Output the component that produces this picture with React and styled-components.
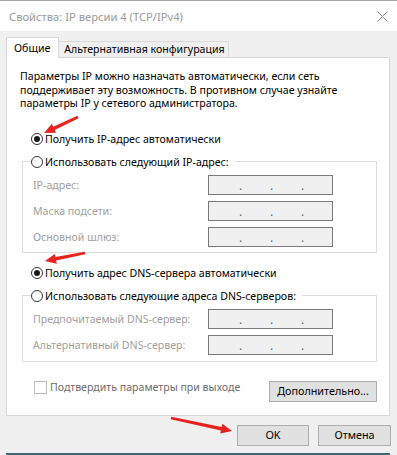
import React from 'react';
import styled, { createGlobalStyle } from 'styled-components';

const GlobalStyle = createGlobalStyle`
  html, body { margin: 0; padding: 0; background: #f0f0f0; }
  body { font-family: "Noto Sans", "Segoe UI", sans-serif; }
  * { box-sizing: border-box; }
`;

const Window = styled.div`
  position: relative;
  width: 397px;
  height: 455px;
  display: flex;
  flex-direction: column;
  background: #f0f0f0;
  overflow: hidden;
  font-size: 10.6px;
  color: #000;
`;

const TitleBar = styled.div`
  height: 31px;
  flex: none;
  background: #fff;
  border-top: 1px solid #a5a5a5;
  display: flex;
  align-items: center;
  justify-content: space-between;
  padding: 0 9px 0 9px;
  color: #9a9a9a;
  font-size: 11.2px;
`;

const Body = styled.div`
  flex: 1;
  display: flex;
  flex-direction: column;
  padding: 6px 7px 0 6px;
`;

const TabStrip = styled.div`
  display: flex;
  align-items: flex-end;
  height: 20px;
  position: relative;
  z-index: 1;
`;

const Tab = styled.div`
  height: ${p => (p.$active ? '21px' : '16px')};
  margin-bottom: ${p => (p.$active ? '-1px' : '0')};
  background: ${p => (p.$active ? '#fff' : '#f0f0f0')};
  border: 1px solid #d9d9d9;
  border-bottom: none;
  border-left: ${p => (p.$active ? '1px solid #d9d9d9' : 'none')};
  padding: ${p => (p.$active ? '0 8px 0 7px' : '0 3px 0 5px')};
  display: flex;
  align-items: center;
  line-height: 1;
  white-space: nowrap;
`;

const Panel = styled.div`
  height: 359px;
  flex: none;
  background: #fff;
  border: 1px solid #d9d9d9;
  padding: 12px 12px 0 13px;
  display: flex;
  flex-direction: column;
`;

const Description = styled.p`
  margin: 0;
  line-height: 13.5px;
  white-space: nowrap;
`;

const OptionRow = styled.label`
  display: flex;
  align-items: center;
  gap: 2px;
  height: 14px;
  margin-top: ${p => p.$mt || 0}px;
  margin-left: 11px;
  white-space: nowrap;
`;

const Radio = styled.span`
  width: 12px;
  height: 12px;
  flex: none;
  border-radius: 50%;
  border: 1px solid #333;
  background: #fff;
  display: flex;
  align-items: center;
  justify-content: center;
  &::after {
    content: '';
    width: 6px;
    height: 6px;
    border-radius: 50%;
    background: ${p => (p.$checked ? '#1a1a1a' : 'transparent')};
  }
`;

const Group = styled.fieldset`
  margin: ${p => p.$mt || 0}px 0 0 2px;
  border: 1px solid #dcdcdc;
  padding: 6px 43px ${p => p.$pb || 6}px 10px;
  min-width: 0;
`;

const Legend = styled.legend`
  padding: 0 6px 0 0;
  margin-left: -2px;
  display: flex;
  align-items: center;
  gap: 2px;
  height: 14px;
  white-space: nowrap;
`;

const FieldGrid = styled.div`
  display: grid;
  grid-template-columns: 1fr 125px;
  row-gap: 6px;
  align-items: center;
`;

const FieldLabel = styled.span`
  color: #a0a0a0;
  white-space: nowrap;
`;

const IpBox = styled.div`
  height: 20px;
  border: 1px solid #7a7a7a;
  background: #f0f0f0;
  display: flex;
  align-items: center;
  padding-left: 2px;
  color: #5a6a7a;
`;

const Seg = styled.span`
  flex: 1;
`;

const Dot = styled.span`
  width: 3px;
  text-align: center;
  line-height: 1;
  font-size: 12px;
  transform: translateY(1px);
`;

const BottomRow = styled.div`
  display: flex;
  justify-content: space-between;
  align-items: flex-start;
  margin-top: 19px;
  padding-left: 14px;
`;

const CheckLabel = styled.label`
  display: flex;
  align-items: center;
  gap: 3px;
  height: 13px;
  color: #6d6d6d;
  white-space: nowrap;
`;

const CheckBox = styled.span`
  width: 13px;
  height: 13px;
  flex: none;
  border: 1px solid #bcbcbc;
  background: #fff;
`;

const Button = styled.button`
  font: inherit;
  font-size: 10.8px;
  color: #000;
  height: 21px;
  width: ${p => p.$w || 72}px;
  background: #e1e1e1;
  border: 1px solid #adadad;
  padding: 0;
  display: flex;
  align-items: center;
  justify-content: center;
  line-height: 1;
`;

const Footer = styled.div`
  display: flex;
  justify-content: flex-end;
  gap: 9px;
  padding-top: 9px;
  margin-right: -1px;
`;

const BottomBand = styled.div`
  margin-top: auto;
  height: 2px;
  background: #3e6879;
  flex: none;
`;

const Overlay = styled.svg`
  position: absolute;
  left: 0;
  top: 0;
  pointer-events: none;
`;

function arrowPoints(x1, y1, x2, y2, head = 11, hw = 5, tw = 1.3, bw = 1.8) {
  const dx = x2 - x1, dy = y2 - y1;
  const len = Math.hypot(dx, dy);
  const ux = dx / len, uy = dy / len;
  const nx = -uy, ny = ux;
  const bx = x2 - ux * head, by = y2 - uy * head;
  const pts = [
    [x1 + nx * tw, y1 + ny * tw],
    [bx + nx * bw, by + ny * bw],
    [bx + nx * hw, by + ny * hw],
    [x2, y2],
    [bx - nx * hw, by - ny * hw],
    [bx - nx * bw, by - ny * bw],
    [x1 - nx * tw, y1 - ny * tw],
  ];
  return pts.map(p => p.map(v => v.toFixed(1)).join(',')).join(' ');
}

const IpField = () => (
  <IpBox>
    <Seg /><Dot>.</Dot><Seg /><Dot>.</Dot><Seg /><Dot>.</Dot><Seg />
  </IpBox>
);

export default function App() {
  return (
    <>
      <GlobalStyle />
      <Window>
        <TitleBar>
          <span>Свойства: IP версии 4 (TCP/IPv4)</span>
          <svg width="11" height="11" viewBox="0 0 11 11">
            <path d="M0.5 0.5 L10.5 10.5 M10.5 0.5 L0.5 10.5" stroke="#8a8a8a" strokeWidth="1" fill="none" />
          </svg>
        </TitleBar>
        <Body>
          <TabStrip>
            <Tab $active>Общие</Tab>
            <Tab>Альтернативная конфигурация</Tab>
          </TabStrip>
          <Panel>
            <Description>
              Параметры IP можно назначать автоматически, если сеть<br />
              поддерживает эту возможность. В противном случае узнайте<br />
              параметры IP у сетевого администратора.
            </Description>
            <OptionRow $mt={21}>
              <Radio $checked />
              Получить IP-адрес автоматически
            </OptionRow>
            <Group $mt={9} $pb={5}>
              <Legend>
                <Radio />
                Использовать следующий IP-адрес:
              </Legend>
              <FieldGrid>
                <FieldLabel>IP-адрес:</FieldLabel>
                <IpField />
                <FieldLabel>Маска подсети:</FieldLabel>
                <IpField />
                <FieldLabel>Основной шлюз:</FieldLabel>
                <IpField />
              </FieldGrid>
            </Group>
            <OptionRow $mt={13}>
              <Radio $checked />
              Получить адрес DNS-сервера автоматически
            </OptionRow>
            <Group $mt={9} $pb={6}>
              <Legend>
                <Radio />
                Использовать следующие адреса DNS-серверов:
              </Legend>
              <FieldGrid>
                <FieldLabel>Предпочитаемый DNS-сервер:</FieldLabel>
                <IpField />
                <FieldLabel>Альтернативный DNS-сервер:</FieldLabel>
                <IpField />
              </FieldGrid>
            </Group>
            <BottomRow>
              <CheckLabel>
                <CheckBox />
                Подтвердить параметры при выходе
              </CheckLabel>
              <Button $w={108}>Дополнительно...</Button>
            </BottomRow>
          </Panel>
          <Footer>
            <Button>OK</Button>
            <Button $w={73}>Отмена</Button>
          </Footer>
          <BottomBand />
        </Body>
        <Overlay width="397" height="455" viewBox="0 0 397 455">
          <polygon points={arrowPoints(78, 117, 44, 133)} fill="#e8231e" />
          <polygon points={arrowPoints(85, 253, 45, 261)} fill="#e8231e" />
          <polygon points={arrowPoints(171, 418, 232, 431)} fill="#e8231e" />
        </Overlay>
      </Window>
    </>
  );
}
